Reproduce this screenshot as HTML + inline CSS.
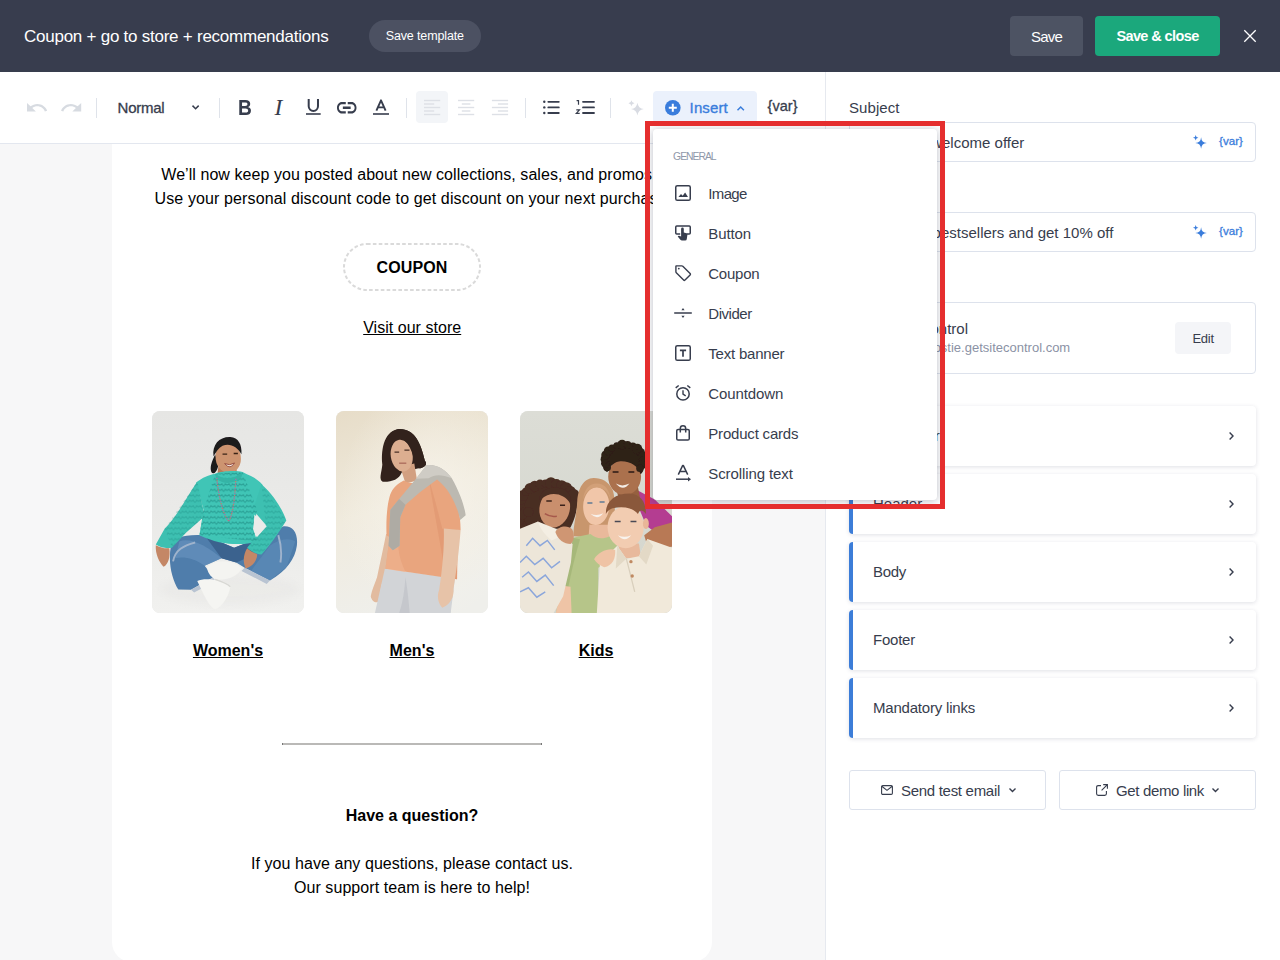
<!DOCTYPE html>
<html lang="en">
<head>
<meta charset="utf-8">
<title>Coupon + go to store + recommendations</title>
<style>
*{box-sizing:border-box;margin:0;padding:0}
html,body{width:1280px;height:960px;overflow:hidden;background:#fff}
body{font-family:"Liberation Sans",sans-serif;color:#373d4d;position:relative}
.abs{position:absolute}
.t{position:absolute;white-space:nowrap;line-height:1}
svg{position:absolute;overflow:visible}
#hdr{position:absolute;left:0;top:0;width:1280px;height:72px;background:#383d4e}
.pill{position:absolute;left:369px;top:20px;width:112px;height:32px;border-radius:16px;background:#4c5162}
.hb{position:absolute;top:16px;height:40px;border-radius:4px}
#tb{position:absolute;left:0;top:72px;width:825px;height:72px;background:#fff;border-bottom:1px solid #e3e7ef}
.sep{position:absolute;top:98px;width:1px;height:20px;background:#dfe3ea}
#canvas{position:absolute;left:0;top:144px;width:825px;height:816px;background:#f7f7f8}
#card{position:absolute;left:112px;top:144px;width:600px;height:818px;background:#fff;border-radius:0 0 20px 20px}
.em{color:#000}
.u{text-decoration:underline;text-decoration-thickness:1.4px;text-underline-offset:1.2px}
#coupon{position:absolute;left:343px;top:243px;width:138px;height:48px;border:2px dashed #dcdcdc;border-radius:24px}
.ph{position:absolute;top:411px;width:152px;height:202px;border-radius:8px;overflow:hidden;background:#e8e8e6}
.ph svg{left:0;top:0}
#right{position:absolute;left:825px;top:72px;width:455px;height:888px;background:#fff;border-left:1px solid #e6e9ef}
.inp{position:absolute;left:849px;width:407px;height:40px;border:1px solid #dde2ec;border-radius:4px;background:#fff}
.acc{position:absolute;left:849px;width:407px;height:60px;border-radius:4px;background:#fff;border-left:4px solid #3c7dd8;box-shadow:0 1px 4px rgba(40,50,80,.15)}
.btn{position:absolute;top:770px;width:197px;height:39.5px;border:1px solid #dde2ec;border-radius:3px;background:#fff}
#edit{position:absolute;left:1175px;top:322px;width:56px;height:32px;border-radius:4px;background:#f4f5f8}
#dd{position:absolute;left:653px;top:129px;width:284px;height:371px;background:#fff;border-radius:4px;box-shadow:0 1px 8px rgba(30,40,70,.30)}
#red{position:absolute;left:645px;top:121px;width:300px;height:388px;border:5px solid #e52e2e}
</style>
</head>
<body>
<div id="hdr"></div>
<div class="t" style="top:28.01px;font-size:17px;left:24.00px;letter-spacing:-0.246px;color:#fff;">Coupon + go to store + recommendations</div>
<div class="pill"></div>
<div class="t" style="top:29.82px;font-size:12.5px;left:385.70px;letter-spacing:-0.131px;color:#fff;">Save template</div>
<div class="hb" style="left:1010px;width:73px;background:#4d5363"></div>
<div class="t" style="top:28.70px;font-size:15px;left:1031.00px;letter-spacing:-0.797px;color:#fff;">Save</div>
<div class="hb" style="left:1095px;width:125px;background:#1ba87c"></div>
<div class="t" style="top:29.13px;font-size:14.5px;left:1116.40px;letter-spacing:-0.606px;color:#fff;font-weight:700;">Save &amp; close</div>
<svg style="left:1244px;top:30px;" width="12" height="12" viewBox="0 0 12 12" preserveAspectRatio="none"><path d="M0.3 0.3L11.7 11.7M11.7 0.3L0.3 11.7" stroke="#fff" stroke-width="1.3" fill="none"/></svg>
<div id="tb"></div>
<div class="sep" style="left:96px"></div>
<div class="sep" style="left:219px"></div>
<div class="sep" style="left:406px"></div>
<div class="sep" style="left:525px"></div>
<div class="sep" style="left:610px"></div>
<svg style="left:26.9px;top:102.7px;" width="20.2" height="8.9" viewBox="2 7 20.5 9.5" preserveAspectRatio="none"><path fill="#d7dbe1" d="M12.5 8c-2.65 0-5.05.99-6.9 2.6L2 7v9h9l-3.62-3.62c1.39-1.16 3.16-1.88 5.12-1.88 3.54 0 6.55 2.31 7.6 5.5l2.37-.78C21.08 11.03 17.15 8 12.5 8z"/></svg>
<svg style="left:61px;top:102.7px;" width="20.2" height="8.9" viewBox="1.5 7 20.5 9.5" preserveAspectRatio="none"><path fill="#d7dbe1" d="M18.4 10.6C16.55 8.99 14.15 8 11.5 8c-4.65 0-8.58 3.03-9.96 7.22L3.9 16c1.05-3.19 4.05-5.5 7.6-5.5 1.95 0 3.73.72 5.12 1.88L13 16h9V7l-3.6 3.6z"/></svg>
<div class="t" style="top:99.90px;font-size:15px;left:117.60px;letter-spacing:-0.257px;color:#373d4d;-webkit-text-stroke:0.3px #373d4d;">Normal</div>
<svg style="left:192px;top:105.2px;" width="7.2" height="4.6" viewBox="0 0 7.2 4.6" preserveAspectRatio="none"><path d="M0.5 0.6L3.6 3.7L6.7 0.6" stroke="#373d4d" stroke-width="1.5" fill="none"/></svg>
<div class="t" style="top:96.58px;font-size:22px;left:237.60px;color:#373d4d;font-weight:700;transform:scaleX(.87);transform-origin:0 0;">B</div>
<div class="t" style="left:274.4px;top:96.32px;font-size:23.6px;font-family:'Liberation Serif',serif;font-style:italic;color:#373d4d">I</div>
<svg style="left:305.6px;top:99.4px;" width="14.7" height="15.8" viewBox="0 0 14.7 15.8" preserveAspectRatio="none"><path d="M2.7 0v7.3a4.65 4.65 0 0 0 9.3 0V0" stroke="#373d4d" stroke-width="2" fill="none"/><path d="M0 15h14.7" stroke="#373d4d" stroke-width="1.6"/></svg>
<svg style="left:337.2px;top:101.7px;" width="19.5" height="11.5" viewBox="2 7 20 10" preserveAspectRatio="none"><path fill="#373d4d" d="M3.9 12c0-1.71 1.39-3.1 3.1-3.1h4V7H7c-2.76 0-5 2.24-5 5s2.24 5 5 5h4v-1.9H7c-1.71 0-3.1-1.39-3.1-3.1zM8 13h8v-2H8v2zm9-6h-4v1.9h4c1.71 0 3.1 1.39 3.1 3.1s-1.39 3.1-3.1 3.1h-4V17h4c2.76 0 5-2.24 5-5s-2.24-5-5-5z"/></svg>
<svg style="left:373px;top:99.4px;" width="16" height="15.8" viewBox="0 0 16 15.8" preserveAspectRatio="none"><path d="M3.4 11.7L8 1.3L12.6 11.7M4.9 8.4h6.2" stroke="#373d4d" stroke-width="1.9" fill="none" stroke-linejoin="round"/><path d="M0 15h16" stroke="#373d4d" stroke-width="1.6"/></svg>
<div class="abs" style="left:416px;top:91px;width:32px;height:32px;border-radius:4px;background:#f3f5f8"></div>
<svg style="left:0px;top:0px;pointer-events:none;" width="1280" height="960" viewBox="0 0 1280 960" preserveAspectRatio="none"><path d="M424 100.5h16.2" stroke="#dde0e6" stroke-width="1.4"/><path d="M424 104h10.2" stroke="#dde0e6" stroke-width="1.4"/><path d="M424 107.5h16.2" stroke="#dde0e6" stroke-width="1.4"/><path d="M424 111h10.2" stroke="#dde0e6" stroke-width="1.4"/><path d="M424 114.5h16.2" stroke="#dde0e6" stroke-width="1.4"/><path d="M458.0 100.5h16.2" stroke="#dde0e6" stroke-width="1.4"/><path d="M461.8 104h8.6" stroke="#dde0e6" stroke-width="1.4"/><path d="M458.0 107.5h16.2" stroke="#dde0e6" stroke-width="1.4"/><path d="M461.8 111h8.6" stroke="#dde0e6" stroke-width="1.4"/><path d="M458.0 114.5h16.2" stroke="#dde0e6" stroke-width="1.4"/><path d="M491.9 100.5h16.2" stroke="#dde0e6" stroke-width="1.4"/><path d="M497.9 104h10.2" stroke="#dde0e6" stroke-width="1.4"/><path d="M491.9 107.5h16.2" stroke="#dde0e6" stroke-width="1.4"/><path d="M497.9 111h10.2" stroke="#dde0e6" stroke-width="1.4"/><path d="M491.9 114.5h16.2" stroke="#dde0e6" stroke-width="1.4"/></svg>
<svg style="left:0px;top:0px;" width="1280" height="960" viewBox="0 0 1280 960" preserveAspectRatio="none"><circle cx="544.3" cy="101.8" r="1.2" fill="#373d4d"/><path d="M548.3 101.8h10.5" stroke="#373d4d" stroke-width="1.8" stroke-linecap="round"/><path d="M583 101.8h11" stroke="#373d4d" stroke-width="1.8" stroke-linecap="round"/><circle cx="544.3" cy="107.4" r="1.2" fill="#373d4d"/><path d="M548.3 107.4h10.5" stroke="#373d4d" stroke-width="1.8" stroke-linecap="round"/><path d="M583 107.4h11" stroke="#373d4d" stroke-width="1.8" stroke-linecap="round"/><circle cx="544.3" cy="113" r="1.2" fill="#373d4d"/><path d="M548.3 113h10.5" stroke="#373d4d" stroke-width="1.8" stroke-linecap="round"/><path d="M583 113h11" stroke="#373d4d" stroke-width="1.8" stroke-linecap="round"/><path d="M576.6 100.6h1.9v4.2" stroke="#373d4d" stroke-width="1.2" fill="none"/><path d="M576.3 109.8h3.2l-3.2 3.6h3.4" stroke="#373d4d" stroke-width="1.2" fill="none"/></svg>
<svg style="left:0px;top:0px;" width="1280" height="960" viewBox="0 0 1280 960" preserveAspectRatio="none"><path d="M637.40 102.70Q638.17 108.33 643.80 109.10Q638.17 109.87 637.40 115.50Q636.63 109.87 631.00 109.10Q636.63 108.33 637.40 102.70ZM631.45 100.27Q631.81 102.92 634.46 103.28Q631.81 103.64 631.45 106.28Q631.09 103.64 628.44 103.28Q631.09 102.92 631.45 100.27Z" fill="#d9dce3"/></svg>
<div class="abs" style="left:653px;top:91px;width:104px;height:32px;border-radius:4px;background:#ebf1fc"></div>
<svg style="left:665px;top:99.8px;" width="15.6" height="15.6" viewBox="0 0 15.6 15.6" preserveAspectRatio="none"><circle cx="7.8" cy="7.8" r="7.8" fill="#3a7ddc"/><path d="M7.8 3.8v8M3.8 7.8h8" stroke="#fff" stroke-width="2"/></svg>
<div class="t" style="top:99.90px;font-size:15px;left:689.60px;letter-spacing:0.131px;color:#3a7ddc;-webkit-text-stroke:0.35px #3a7ddc;">Insert</div>
<svg style="left:737.2px;top:105.6px;" width="7.4" height="4.7" viewBox="0 0 7.4 4.7" preserveAspectRatio="none"><path d="M0.5 4.2L3.7 1L6.9 4.2" stroke="#3a7ddc" stroke-width="1.5" fill="none"/></svg>
<div class="t" style="top:99.13px;font-size:14.5px;left:767.60px;letter-spacing:0.034px;color:#373d4d;-webkit-text-stroke:0.3px #373d4d;">{var}</div>
<div id="canvas"></div>
<div id="card"></div>
<div class="t" style="top:167.46px;font-size:16px;left:161.30px;letter-spacing:0.055px;color:#000;">We’ll now keep you posted about new collections, sales, and promos.</div>
<div class="t" style="top:191.46px;font-size:16px;left:154.60px;letter-spacing:0.111px;color:#000;">Use your personal discount code to get discount on your next purchase.</div>
<svg style="left:343px;top:243px;" width="138" height="48" viewBox="0 0 138 48" preserveAspectRatio="none"><rect x="1" y="1" width="136" height="46" rx="23" fill="none" stroke="#dadada" stroke-width="2" stroke-dasharray="3.6 2.26"/></svg>
<div class="t em" style="top:259.86px;font-size:16px;left:376.60px;letter-spacing:0.096px;color:#000;font-weight:700;">COUPON</div>
<div class="t em u" style="top:319.66px;font-size:16px;left:363.20px;letter-spacing:0.032px;color:#000;">Visit our store</div>
<div class="ph" style="left:152px"><svg width="152" height="202" viewBox="0 0 722 960" preserveAspectRatio="none"><defs><linearGradient id="g1" x1="0" y1="0" x2="0" y2="1"><stop offset="0" stop-color="#e6e6e4"/><stop offset=".6" stop-color="#ebebe9"/><stop offset="1" stop-color="#f1f1ef"/></linearGradient><filter id="b1" x="-5%" y="-5%" width="110%" height="110%"><feGaussianBlur stdDeviation="3"/></filter><filter id="b1s" x="-20%" y="-20%" width="140%" height="140%"><feGaussianBlur stdDeviation="18"/></filter><pattern id="knit" width="34" height="26" patternUnits="userSpaceOnUse"><path d="M0 20Q8 4 17 14Q26 4 34 20" stroke="#1d8a82" stroke-width="5" fill="none" opacity=".6"/><circle cx="8" cy="8" r="2.5" fill="#17756f" opacity=".6"/><circle cx="26" cy="8" r="2.5" fill="#17756f" opacity=".6"/></pattern></defs><rect width="722" height="960" fill="url(#g1)"/><ellipse cx="370" cy="850" rx="330" ry="70" fill="#dedddb" filter="url(#b1s)" opacity=".25"/><g filter="url(#b1)"><path d="M300 205C285 240 270 270 285 295C300 300 312 280 315 255Z" fill="#1d1a1c"/><path d="M315 265L400 265L405 310L310 310Z" fill="#b97b59"/><ellipse cx="362" cy="222" rx="60" ry="74" fill="#cd946f" transform="rotate(-8 362 222)"/><path d="M292 215C285 160 320 122 372 124C410 126 428 160 425 205C405 170 370 150 335 165C315 175 305 195 292 215Z" fill="#1d1a1c"/><path d="M335 205h22M388 202h20" stroke="#3a2419" stroke-width="6"/><path d="M345 250Q370 262 392 247Q372 282 345 250Z" fill="#f6efe9" stroke="#8d3f35" stroke-width="4"/><path d="M90 640C100 600 150 585 250 590L390 650L520 600L625 548C670 545 695 580 688 640C680 700 640 760 560 805L440 745L400 720L330 700L250 735L292 790L185 850L125 848C95 800 75 720 90 640Z" fill="#4f7dab"/><path d="M250 590L390 650L520 600L470 690L400 720L330 700Z" fill="#3b628e"/><path d="M130 620C180 600 260 640 330 700L250 735C200 700 150 690 110 700Z" fill="#6591bd" opacity=".7"/><path d="M560 640C600 610 650 600 680 620L640 740L560 805L470 760Z" fill="#5d8bb8" opacity=".7"/><path d="M185 850L292 790L300 810L200 862ZM440 745L560 805L545 822L425 760Z" fill="#b9c4d2"/><path d="M100 715C110 660 150 640 205 625M600 590C615 640 615 690 610 720" stroke="#9fb3cc" stroke-width="9" fill="none"/><path d="M262 740C300 705 380 705 425 745C420 780 350 810 300 800C275 785 262 765 262 740Z" fill="#f4f4f1"/><path d="M215 808C250 790 330 800 372 835C365 880 335 930 300 942C270 930 250 880 215 808Z" fill="#f5f5f2"/><path d="M300 800C330 810 360 822 372 835" stroke="#d8d8d4" stroke-width="6" fill="none"/><path d="M300 298C330 285 400 282 430 290C470 310 500 320 525 350L500 470L480 560L500 620C430 640 330 640 225 590L245 470L210 340C240 315 270 305 300 298Z" fill="#3fc5b6"/><path d="M215 335C170 400 120 500 60 560L18 635C40 650 70 655 95 650L160 580L250 500Z" fill="#3cc0b1"/><path d="M520 348C580 400 620 470 638 520C600 580 560 640 520 682C495 680 470 668 452 650L540 540L480 470Z" fill="#3cc0b1"/><path d="M300 298L430 290L500 470L480 560L500 620L225 590L245 470Z" fill="url(#knit)"/><path d="M215 335L250 500L160 580L95 650L60 560ZM520 348L638 520L520 682L452 650L540 540Z" fill="url(#knit)" opacity=".6"/><path d="M486 492L545 548L498 600L482 560Z" fill="#ebebe9"/><path d="M232 520L222 585L190 575Z" fill="#ebebe9"/><path d="M300 298Q365 345 430 290L425 315Q365 365 305 322Z" fill="#35b4a6"/><path d="M308 318C315 400 335 490 365 525C385 490 395 400 398 318" stroke="#c9776a" stroke-width="6" fill="none" stroke-dasharray="6 5"/><path d="M308 318C315 400 335 490 365 525C385 490 395 400 398 318" stroke="#7a7fd0" stroke-width="6" fill="none" stroke-dasharray="4 18"/><path d="M18 638C40 650 62 655 82 652C88 690 78 730 55 740C35 720 15 680 18 638Z" fill="#c48766"/><path d="M452 652C470 668 492 676 500 682C498 710 480 740 445 748C432 720 432 685 452 652Z" fill="#c48766"/></g></svg></div>
<div class="ph" style="left:336px"><svg width="152" height="202" viewBox="0 0 722 960" preserveAspectRatio="none"><defs><linearGradient id="g2" x1="0.1" y1="0" x2="0.35" y2="1"><stop offset="0" stop-color="#e7ddc9"/><stop offset=".5" stop-color="#f0ebde"/><stop offset="1" stop-color="#efefeb"/></linearGradient><radialGradient id="g2r" cx=".62" cy=".45" r=".6"><stop offset="0" stop-color="#f7f3ea" stop-opacity=".9"/><stop offset="1" stop-color="#f7f3ea" stop-opacity="0"/></radialGradient><filter id="b2" x="-5%" y="-5%" width="110%" height="110%"><feGaussianBlur stdDeviation="3"/></filter></defs><rect width="722" height="960" fill="url(#g2)"/><rect width="722" height="960" fill="url(#g2r)"/><g filter="url(#b2)"><path d="M300 86C235 92 212 170 220 255C216 295 202 325 222 336C262 338 300 326 312 292L392 272C420 272 438 252 422 236C402 150 372 84 300 86Z" fill="#33231d"/><path d="M305 265L372 250L385 330L330 345Z" fill="#d2a081"/><ellipse cx="312" cy="212" rx="52" ry="76" fill="#dcae90" transform="rotate(-9 312 212)"/><path d="M300 86C250 92 232 140 240 220C250 170 262 140 290 128C330 128 360 170 372 240L392 272C420 272 438 252 422 236C402 150 372 84 300 86Z" fill="#33231d"/><path d="M278 196h22M325 186h24" stroke="#4a3226" stroke-width="6"/><path d="M300 248h34" stroke="#a8685a" stroke-width="6"/><path d="M238 585L290 600C270 680 245 760 215 830L205 905C190 915 170 905 165 880C170 850 185 820 195 790C210 720 225 650 238 585Z" fill="#e2bb9f"/><path d="M232 750L565 795L545 960L185 960Z" fill="#d2d4d7"/><path d="M330 790C340 850 345 900 350 960L300 960C320 900 325 850 330 790Z" fill="#bfc2c7" opacity=".7"/><path d="M322 330C280 350 262 380 255 405C240 460 238 530 240 590L255 600L235 750L575 800L578 565L592 565C590 480 575 400 545 335L440 312C400 345 350 350 322 330Z" fill="#e9a57e"/><path d="M440 320C470 420 490 500 505 560L578 565L575 800L520 795C510 700 480 560 440 320Z" fill="#df946c" opacity=".55"/><path d="M255 600L235 750L330 765C300 700 290 650 300 600Z" fill="#f0b491" opacity=".6"/><path d="M512 558L592 565C585 660 572 760 558 845C562 880 545 920 505 935C485 915 478 880 490 850C505 750 515 650 512 558Z" fill="#e7c3a8"/><path d="M430 258C470 250 520 275 550 320C585 380 610 450 616 495L590 518C575 450 540 370 480 325L400 385L330 445L305 505L302 640L270 662L250 640L258 470L300 418L380 322Z" fill="#bcb9b1"/><path d="M430 258C470 250 520 275 550 320C500 300 470 300 440 320L380 322Z" fill="#cfccc5"/><path d="M258 470L300 418L330 445L305 505L302 640L270 662L250 640Z" fill="#aeaba4"/></g></svg></div>
<div class="ph" style="left:520px"><svg width="152" height="202" viewBox="0 0 722 960" preserveAspectRatio="none"><defs><linearGradient id="g3" x1="0" y1="0" x2="0" y2="1"><stop offset="0" stop-color="#dcddd6"/><stop offset="1" stop-color="#d3d5cc"/></linearGradient><filter id="b3" x="-5%" y="-5%" width="110%" height="110%"><feGaussianBlur stdDeviation="3"/></filter><filter id="b3h" x="-10%" y="-10%" width="120%" height="120%"><feGaussianBlur stdDeviation="6"/></filter></defs><rect width="722" height="960" fill="url(#g3)"/><g filter="url(#b3)"><path d="M560 378L640 420L722 500L722 560L640 575L600 545L560 450Z" fill="#b43c91"/><path d="M590 590L640 552L722 530L722 645L640 652L600 625Z" fill="#b87955"/><path d="M455 360L560 360L575 440L470 420Z" fill="#96603f"/><ellipse cx="497" cy="312" rx="78" ry="88" fill="#ab714e"/><path d="M392 250C380 190 430 148 500 152C560 150 600 190 594 250C590 280 580 300 572 300C560 260 520 235 470 240C440 245 425 270 415 290C400 285 394 270 392 250Z" fill="#2e2018"/><path d="M440 290h28M515 290h28" stroke="#2a1a12" stroke-width="7"/><path d="M455 345Q485 362 520 345Q490 385 455 345Z" fill="#f3ece6"/><circle cx="414" cy="268" r="18" fill="#2e2018"/><circle cx="405" cy="249" r="20" fill="#2e2018"/><circle cx="402" cy="229" r="19" fill="#2e2018"/><circle cx="407" cy="209" r="21" fill="#2e2018"/><circle cx="419" cy="190" r="21" fill="#2e2018"/><circle cx="437" cy="176" r="17" fill="#2e2018"/><circle cx="460" cy="165" r="16" fill="#2e2018"/><circle cx="485" cy="160" r="23" fill="#2e2018"/><circle cx="511" cy="161" r="18" fill="#2e2018"/><circle cx="536" cy="168" r="18" fill="#2e2018"/><circle cx="557" cy="180" r="24" fill="#2e2018"/><circle cx="573" cy="196" r="20" fill="#2e2018"/><circle cx="583" cy="215" r="23" fill="#2e2018"/><circle cx="586" cy="235" r="20" fill="#2e2018"/><circle cx="581" cy="255" r="21" fill="#2e2018"/><circle cx="569" cy="273" r="17" fill="#2e2018"/><path d="M0 420C40 350 120 325 200 340C250 350 280 380 275 430C270 480 255 530 235 560L60 560L0 560Z" fill="#4a2d21"/><circle cx="2" cy="484" r="25" fill="#4a2d21"/><circle cx="-3" cy="463" r="28" fill="#4a2d21"/><circle cx="-2" cy="441" r="24" fill="#4a2d21"/><circle cx="4" cy="420" r="26" fill="#4a2d21"/><circle cx="14" cy="401" r="26" fill="#4a2d21"/><circle cx="29" cy="383" r="20" fill="#4a2d21"/><circle cx="48" cy="368" r="26" fill="#4a2d21"/><circle cx="70" cy="356" r="25" fill="#4a2d21"/><circle cx="95" cy="348" r="22" fill="#4a2d21"/><circle cx="121" cy="344" r="19" fill="#4a2d21"/><circle cx="147" cy="343" r="28" fill="#4a2d21"/><circle cx="173" cy="347" r="24" fill="#4a2d21"/><circle cx="198" cy="355" r="26" fill="#4a2d21"/><circle cx="220" cy="367" r="28" fill="#4a2d21"/><circle cx="239" cy="382" r="26" fill="#4a2d21"/><circle cx="255" cy="399" r="28" fill="#4a2d21"/><circle cx="40" cy="560" r="19" fill="#4a2d21"/><circle cx="12" cy="548" r="22" fill="#4a2d21"/><circle cx="0" cy="520" r="20" fill="#4a2d21"/><circle cx="12" cy="492" r="23" fill="#4a2d21"/><circle cx="40" cy="480" r="23" fill="#4a2d21"/><path d="M350 318C300 320 275 370 272 430C268 500 250 560 255 595L330 600L430 590L450 520C452 460 450 400 440 375C420 335 390 318 350 318Z" fill="#c8966d"/><path d="M330 540L420 540L425 610L325 610Z" fill="#e9b99b"/><path d="M250 602L335 585C365 610 395 610 425 595L462 640L445 705L372 745L372 960L170 960L200 830L240 700Z" fill="#b6c589"/><path d="M250 602L240 700L200 830L230 835C245 760 262 690 285 610Z" fill="#9fb274" opacity=".7"/><ellipse cx="362" cy="452" rx="62" ry="90" fill="#f1c6a9" transform="rotate(3 362 452)"/><path d="M300 420C305 370 330 345 365 345C400 345 425 370 430 420C420 385 400 365 365 362C330 365 312 385 300 420Z" fill="#d2a078"/><path d="M320 437h24M378 432h24" stroke="#5f7b95" stroke-width="7"/><path d="M335 488Q365 502 395 486Q368 522 335 488Z" fill="#f7f1ec"/><path d="M200 830L240 835L245 960L170 960Z" fill="#efc4a6"/><ellipse cx="165" cy="462" rx="72" ry="92" fill="#c98f6d" transform="rotate(12 165 462)"/><path d="M90 420C100 370 150 350 210 372C235 385 245 410 240 440C215 400 170 385 130 400C110 410 98 420 90 420Z" fill="#4a2d21"/><path d="M125 428h26M190 448h24" stroke="#3a241a" stroke-width="7"/><path d="M118 488Q145 506 175 500" stroke="#a6584b" stroke-width="7" fill="none"/><path d="M0 560L85 525C110 560 150 585 185 600L250 632L242 720L205 880L160 960L0 960Z" fill="#ede6d9"/><path d="M85 525L170 560L185 600L150 615C120 590 95 560 85 525Z" fill="#f4eee3"/><path d="M30 640L60 605L95 640L130 615L165 660M0 720L30 690L70 730L110 700L150 745L190 715M10 790L40 765L80 810L120 780L160 830M0 860L40 840L80 885L120 860" stroke="#8ba6db" stroke-width="7" fill="none"/><path d="M168 575C180 548 225 540 248 562C262 590 255 622 240 632C210 632 180 612 168 575Z" fill="#cf9673"/><path d="M470 630L565 630L575 700L465 700Z" fill="#e8b99c"/><path d="M462 640L380 720L365 960L722 960L722 650L605 608L565 690L505 702Z" fill="#f1e9da"/><path d="M462 640L505 702L455 748ZM605 608L565 690L600 730L632 640Z" fill="#e3d9c6"/><path d="M505 702L520 760L545 860" stroke="#d9cfbc" stroke-width="6" fill="none"/><circle cx="527" cy="716" r="8" fill="#c08a62"/><circle cx="533" cy="784" r="8" fill="#c08a62"/><ellipse cx="502" cy="552" rx="86" ry="100" fill="#f2ccb1"/><ellipse cx="598" cy="535" rx="14" ry="26" fill="#e9b698"/><path d="M408 490C405 430 450 392 520 392C570 395 600 430 598 490C585 470 570 465 560 490C540 460 490 450 440 462C420 470 412 480 408 490Z" fill="#8a583a"/><path d="M450 525h28M525 525h28" stroke="#4a4a55" stroke-width="7"/><path d="M465 590Q495 606 528 590Q498 628 465 590Z" fill="#f8f3ee"/><path d="M352 705C370 670 420 650 452 660C455 700 440 735 400 742C380 735 362 722 352 705Z" fill="#efc3a5"/></g></svg></div>
<div class="t em u" style="top:642.66px;font-size:16px;left:192.90px;color:#000;font-weight:700;">Women's</div>
<div class="t em u" style="top:642.66px;font-size:16px;left:389.50px;letter-spacing:0.059px;color:#000;font-weight:700;">Men's</div>
<div class="t em u" style="top:642.66px;font-size:16px;left:578.65px;letter-spacing:0.007px;color:#000;font-weight:700;">Kids</div>
<div class="abs" style="left:282px;top:743px;width:260px;height:2px;background:#bab9b7;border-left:1px solid #777;border-right:1px solid #777"></div>
<div class="t em" style="top:807.66px;font-size:16px;left:345.75px;color:#000;font-weight:700;">Have a question?</div>
<div class="t em" style="top:855.56px;font-size:16px;left:251.00px;letter-spacing:0.060px;color:#000;">If you have any questions, please contact us.</div>
<div class="t em" style="top:879.56px;font-size:16px;left:294.00px;letter-spacing:0.064px;color:#000;">Our support team is here to help!</div>
<div id="right"></div>
<div class="t" style="top:99.90px;font-size:15px;left:849.00px;letter-spacing:0.067px;color:#373d4d;">Subject</div>
<div class="inp" style="top:122px"></div>
<div class="t" style="top:134.60px;font-size:15px;left:799.75px;color:#373d4d;">Here’s your special welcome offer</div>
<div class="inp" style="top:212px"></div>
<div class="t" style="top:189.90px;font-size:15px;left:849.00px;color:#373d4d;">Preview text</div>
<div class="t" style="top:224.60px;font-size:15px;left:867.58px;color:#373d4d;">Shop our bestsellers and get 10% off</div>
<svg style="left:0px;top:0px;" width="1280" height="960" viewBox="0 0 1280 960" preserveAspectRatio="none"><path d="M1201.10 137.20Q1201.45 142.65 1206.90 143.00Q1201.45 143.35 1201.10 148.80Q1200.75 143.35 1195.30 143.00Q1200.75 142.65 1201.10 137.20ZM1195.71 135.00Q1195.87 137.56 1198.43 137.72Q1195.87 137.89 1195.71 140.45Q1195.54 137.89 1192.98 137.72Q1195.54 137.56 1195.71 135.00Z" fill="#3a7ddc"/></svg>
<div class="t" style="top:135.38px;font-size:11.6px;left:1219.00px;letter-spacing:0.027px;color:#3a7ddc;-webkit-text-stroke:0.3px #3a7ddc;">{var}</div>
<svg style="left:0px;top:0px;" width="1280" height="960" viewBox="0 0 1280 960" preserveAspectRatio="none"><path d="M1201.10 227.20Q1201.45 232.65 1206.90 233.00Q1201.45 233.35 1201.10 238.80Q1200.75 233.35 1195.30 233.00Q1200.75 232.65 1201.10 227.20ZM1195.71 225.00Q1195.87 227.56 1198.43 227.72Q1195.87 227.89 1195.71 230.45Q1195.54 227.89 1192.98 227.72Q1195.54 227.56 1195.71 225.00Z" fill="#3a7ddc"/></svg>
<div class="t" style="top:225.38px;font-size:11.6px;left:1219.00px;letter-spacing:0.027px;color:#3a7ddc;-webkit-text-stroke:0.3px #3a7ddc;">{var}</div>
<div class="t" style="top:279.90px;font-size:15px;left:849.00px;color:#373d4d;">From</div>
<div class="inp" style="top:302px;height:72px"></div>
<div class="t" style="top:320.60px;font-size:15px;left:875.46px;color:#373d4d;">Getsitecontrol</div>
<div class="t" style="top:340.60px;font-size:13px;left:885.74px;color:#8b92a5;">hello@postie.getsitecontrol.com</div>
<div id="edit"></div>
<div class="t" style="top:331.60px;font-size:13px;left:1192.40px;letter-spacing:-0.225px;color:#373d4d;">Edit</div>
<div class="acc" style="top:406px"></div>
<div class="t" style="top:428.30px;font-size:15px;left:874.76px;color:#373d4d;">Container</div>
<svg style="left:1228.8px;top:432px;" width="4.6" height="8" viewBox="0 0 4.6 8" preserveAspectRatio="none"><path d="M0.6 0.6L4 4L0.6 7.4" stroke="#373d4d" stroke-width="1.4" fill="none"/></svg>
<div class="acc" style="top:474px"></div>
<div class="t" style="top:496.30px;font-size:15px;left:873.00px;color:#373d4d;">Header</div>
<svg style="left:1228.8px;top:500px;" width="4.6" height="8" viewBox="0 0 4.6 8" preserveAspectRatio="none"><path d="M0.6 0.6L4 4L0.6 7.4" stroke="#373d4d" stroke-width="1.4" fill="none"/></svg>
<div class="acc" style="top:542px"></div>
<div class="t" style="top:564.30px;font-size:15px;left:873.00px;letter-spacing:-0.297px;color:#373d4d;">Body</div>
<svg style="left:1228.8px;top:568px;" width="4.6" height="8" viewBox="0 0 4.6 8" preserveAspectRatio="none"><path d="M0.6 0.6L4 4L0.6 7.4" stroke="#373d4d" stroke-width="1.4" fill="none"/></svg>
<div class="acc" style="top:610px"></div>
<div class="t" style="top:632.30px;font-size:15px;left:873.00px;letter-spacing:-0.225px;color:#373d4d;">Footer</div>
<svg style="left:1228.8px;top:636px;" width="4.6" height="8" viewBox="0 0 4.6 8" preserveAspectRatio="none"><path d="M0.6 0.6L4 4L0.6 7.4" stroke="#373d4d" stroke-width="1.4" fill="none"/></svg>
<div class="acc" style="top:678px"></div>
<div class="t" style="top:700.30px;font-size:15px;left:873.00px;letter-spacing:-0.203px;color:#373d4d;">Mandatory links</div>
<svg style="left:1228.8px;top:704px;" width="4.6" height="8" viewBox="0 0 4.6 8" preserveAspectRatio="none"><path d="M0.6 0.6L4 4L0.6 7.4" stroke="#373d4d" stroke-width="1.4" fill="none"/></svg>
<div class="btn" style="left:849px"></div>
<div class="btn" style="left:1059px"></div>
<div class="t" style="top:782.70px;font-size:15px;left:901.00px;letter-spacing:-0.293px;color:#373d4d;">Send test email</div>
<div class="t" style="top:782.70px;font-size:15px;left:1116.00px;letter-spacing:-0.349px;color:#373d4d;">Get demo link</div>
<svg style="left:881px;top:785px;" width="12" height="10" viewBox="0 0 12 10" preserveAspectRatio="none"><rect x="0.6" y="0.6" width="10.8" height="8.8" rx="1.2" stroke="#373d4d" stroke-width="1.1" fill="none"/><path d="M0.8 1.2L6 5.4L11.2 1.2" stroke="#373d4d" stroke-width="1.1" fill="none"/></svg>
<svg style="left:1008.5px;top:788px;" width="7" height="4.4" viewBox="0 0 7 4.4" preserveAspectRatio="none"><path d="M0.5 0.5L3.5 3.5L6.5 0.5" stroke="#373d4d" stroke-width="1.4" fill="none"/></svg>
<svg style="left:1096px;top:784px;" width="12" height="12" viewBox="0 0 12 12" preserveAspectRatio="none"><path d="M5 1.6H2.2Q0.6 1.6 0.6 3.2V9.8Q0.6 11.4 2.2 11.4H8.8Q10.4 11.4 10.4 9.8V7" stroke="#373d4d" stroke-width="1.1" fill="none"/><path d="M7.2 0.6H11.4V4.8M11.4 0.6L5.6 6.4" stroke="#373d4d" stroke-width="1.1" fill="none"/></svg>
<svg style="left:1211.5px;top:788px;" width="7" height="4.4" viewBox="0 0 7 4.4" preserveAspectRatio="none"><path d="M0.5 0.5L3.5 3.5L6.5 0.5" stroke="#373d4d" stroke-width="1.4" fill="none"/></svg>
<div id="dd"></div>
<div class="t" style="top:151.80px;font-size:10.4px;left:673.10px;letter-spacing:-1.029px;color:#8f98aa;">GENERAL</div>
<div class="t" style="top:185.80px;font-size:15px;left:708.30px;letter-spacing:-0.658px;color:#373d4d;">Image</div>
<div class="t" style="top:225.80px;font-size:15px;left:708.30px;letter-spacing:-0.103px;color:#373d4d;">Button</div>
<div class="t" style="top:265.80px;font-size:15px;left:708.30px;letter-spacing:-0.257px;color:#373d4d;">Coupon</div>
<div class="t" style="top:305.80px;font-size:15px;left:708.30px;letter-spacing:-0.468px;color:#373d4d;">Divider</div>
<div class="t" style="top:345.80px;font-size:15px;left:708.30px;letter-spacing:-0.217px;color:#373d4d;">Text banner</div>
<div class="t" style="top:385.80px;font-size:15px;left:708.30px;letter-spacing:-0.099px;color:#373d4d;">Countdown</div>
<div class="t" style="top:425.80px;font-size:15px;left:708.30px;letter-spacing:-0.196px;color:#373d4d;">Product cards</div>
<div class="t" style="top:465.80px;font-size:15px;left:708.30px;letter-spacing:-0.105px;color:#373d4d;">Scrolling text</div>
<svg style="left:0px;top:0px;" width="1280" height="960" viewBox="0 0 1280 960" preserveAspectRatio="none"><rect x="675.75" y="185.75" width="14.5" height="14.5" rx="1.6" stroke="#373d4d" fill="none" stroke-width="1.5"/><path d="M678.4 197.1L681 193.9L682.7 195.7L685.1 192.4L688 197.1Z" fill="#373d4d"/><path d="M680.2 234H676.8Q675.75 234 675.75 233V227Q675.75 226 676.8 226H689.2Q690.25 226 690.25 227V233Q690.25 234 689.2 234H686.6" stroke="#373d4d" fill="none" stroke-width="1.5"/><path d="M681.1 228.9a1.35 1.35 0 0 1 2.7 0V232.5L686.5 233.2Q687.6 233.5 687.4 234.7L686.8 239Q686.6 240.5 685.2 240.5H681.9Q681 240.5 680.4 239.8L677.7 236.5Q678.5 235.2 679.9 235.9L681.1 236.6Z" fill="#373d4d"/><path d="M676.2 265.900h5.600q.6 0 1 .4l7.300 7.300q.7.700 0 1.400l-5.100 5.100q-.7.700-1.400 0l-7.300-7.300q-.4-.4-.4-1v-5.600q0-.3.300-.3z" stroke="#373d4d" fill="none" stroke-width="1.4" stroke-linejoin="round"/><circle cx="678.8" cy="268.600" r="0.9" fill="#373d4d"/><path d="M674.2 313h17.600" stroke="#373d4d" fill="none" stroke-width="1.5"/><path d="M681.4 310.300h3.200l-1.600-2.200zM681.400 315.700h3.200l-1.600 2.200z" fill="#373d4d"/><rect x="675.75" y="345.75" width="14.500" height="14.500" rx="1.6" stroke="#373d4d" fill="none" stroke-width="1.5"/><path d="M679.900 350.400h6.200M683 350.400v6.400" stroke="#373d4d" fill="none" stroke-width="1.700"/><circle cx="683" cy="393.900" r="6.200" stroke="#373d4d" fill="none" stroke-width="1.5"/><path d="M683 390.200v4.000l2.700 1.700" stroke="#373d4d" fill="none" stroke-width="1.4"/><path d="M675.700 387.800l3.000-2.300M690.300 387.800l-3.000-2.300" stroke="#373d4d" fill="none" stroke-width="1.5"/><rect x="676.75" y="429.45" width="12.500" height="10.600" rx="1.4" stroke="#373d4d" fill="none" stroke-width="1.5"/><path d="M680.300 432.600v-4.200a2.700 2.700 0 0 1 5.400 0v4.200" stroke="#373d4d" fill="none" stroke-width="1.5"/><path d="M678.300 474.600l4.300-9.000h.8l4.300 9.000M679.800 471.600h6.400" stroke="#373d4d" fill="none" stroke-width="1.5" stroke-linejoin="round"/><path d="M676 479.200h13" stroke="#373d4d" fill="none" stroke-width="1.5"/><path d="M688 477l3 2.200l-3 2.200z" fill="#373d4d"/></svg>
<div id="red"></div>
</body>
</html>
